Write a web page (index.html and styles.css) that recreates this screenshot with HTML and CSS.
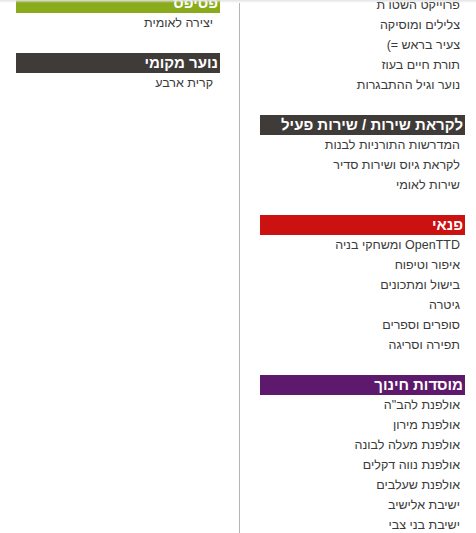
FILE: index.html
```html
<!DOCTYPE html>
<html lang="he" dir="rtl">
<head>
<meta charset="utf-8">
<link rel="stylesheet" href="styles.css">
</head>
<body>
<div class="topshade"></div>
<div class="page">
  <div class="col col-right">
    <div class="group first">
      <ul class="links">
        <li>פרוייקט השטו ת</li>
        <li>צלילים ומוסיקה</li>
        <li>צעיר בראש =)</li>
        <li>תורת חיים בעוז</li>
        <li>נוער וגיל ההתבגרות</li>
      </ul>
    </div>
    <div class="group">
      <div class="head dark">לקראת שירות / שירות פעיל</div>
      <ul class="links">
        <li>המדרשות התורניות לבנות</li>
        <li>לקראת גיוס ושירות סדיר</li>
        <li>שירות לאומי</li>
      </ul>
    </div>
    <div class="group">
      <div class="head red">פנאי</div>
      <ul class="links">
        <li>OpenTTD ומשחקי בניה</li>
        <li>איפור וטיפוח</li>
        <li>בישול ומתכונים</li>
        <li>גיטרה</li>
        <li>סופרים וספרים</li>
        <li>תפירה וסריגה</li>
      </ul>
    </div>
    <div class="group">
      <div class="head purple">מוסדות חינוך</div>
      <ul class="links">
        <li>אולפנת להב"ה</li>
        <li>אולפנת מירון</li>
        <li>אולפנת מעלה לבונה</li>
        <li>אולפנת נווה דקלים</li>
        <li>אולפנת שעלבים</li>
        <li>ישיבת אלישיב</li>
        <li>ישיבת בני צבי</li>
      </ul>
    </div>
  </div>
  <div class="divider"></div>
  <div class="col col-left">
    <div class="group">
      <div class="head green">פסיפס</div>
      <ul class="links">
        <li>יצירה לאומית</li>
      </ul>
    </div>
    <div class="group">
      <div class="head dark">נוער מקומי</div>
      <ul class="links">
        <li>קרית ארבע</li>
      </ul>
    </div>
  </div>
</div>
</body>
</html>
```
FILE: styles.css
```css
html, body {
  margin: 0;
  padding: 0;
  background: #ffffff;
  height: 100%;
  overflow: hidden;
}
body {
  font-family: "Liberation Sans", Arial, sans-serif;
  color: #3a3a3a;
}
.topshade {
  position: fixed;
  top: 0;
  left: 0;
  right: 0;
  height: 3px;
  background: linear-gradient(#e2e2e2, rgba(255,255,255,0));
  z-index: 2;
}
.page {
  display: flex;
  flex-direction: row;
  padding: 0 11px 0 16px;
  height: 100%;
  align-items: stretch;
}
.col-right {
  width: 205px;
  margin-top: -5px;
}
.col-left {
  width: 204px;
  margin-top: -7px;
}
.divider {
  width: 1px;
  background: #b4b4b4;
  margin: 3px 20px 0 19px;
}
.group {
  margin-bottom: 20px;
}
.head {
  height: 20px;
  line-height: 20px;
  color: #ffffff;
  font-weight: bold;
  font-size: 15px;
  padding-right: 2px;
}
.dark { background: #3f3b39; }
.red { background: #cb1211; }
.purple { background: #5d1a6c; }
.green { background: #8aab1c; }
.links {
  list-style: none;
  margin: 0;
  padding: 0 5px 0 0;
}
.col-left .links {
  padding-right: 7px;
}
.links li {
  height: 20px;
  line-height: 20px;
  font-size: 12.5px;
}
```
